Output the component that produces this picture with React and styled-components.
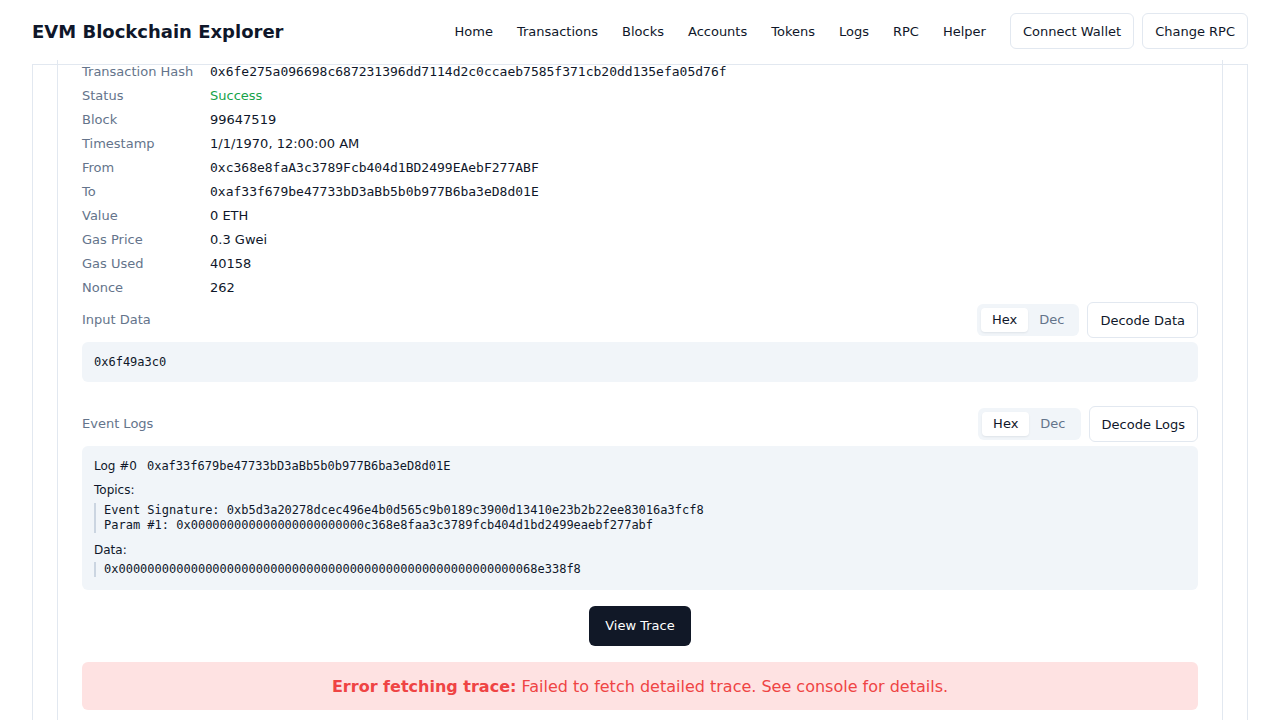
import React from "react";
import styled, { createGlobalStyle } from "styled-components";

const GlobalStyle = createGlobalStyle`
    html, body {
        margin: 0;
        padding: 0;
        background: #ffffff;
    }
    body {
        font-family: "DejaVu Sans", "Noto Sans", sans-serif;
        font-size: 13px;
        color: #0f172a;
        overflow: hidden;
    }
    * {
        box-sizing: border-box;
    }
`;

const mono = `"DejaVu Sans Mono", "Liberation Mono", monospace`;

const Header = styled.header`
    height: 64px;
    padding: 0 32px 2px;
    display: flex;
    align-items: center;
    justify-content: space-between;
    background: #ffffff;
`;

const Title = styled.h1`
    margin: 0;
    font-size: 18px;
    font-weight: 700;
    color: #0f172a;
`;

const NavArea = styled.div`
    display: flex;
    align-items: center;
    gap: 24px;
`;

const Nav = styled.nav`
    display: flex;
    align-items: center;
    gap: 24px;
`;

const NavLink = styled.a`
    font-size: 13px;
    color: #0f172a;
    text-decoration: none;
    cursor: pointer;
`;

const ButtonGroup = styled.div`
    display: flex;
    gap: 8px;
`;

const OutlineButton = styled.button`
    height: 36px;
    padding: 0 12px;
    font-family: inherit;
    font-size: 13px;
    color: #0f172a;
    background: #ffffff;
    border: 1px solid #e2e8f0;
    border-radius: 6px;
    cursor: pointer;
`;

const Outer = styled.main`
    margin: 0 32px;
    padding: 0 24px 24px;
    border: 1px solid #e2e8f0;
`;

const Inner = styled.section`
    padding: 0 24px 24px;
    border-left: 1px solid #e2e8f0;
    border-right: 1px solid #e2e8f0;
`;

const Details = styled.dl`
    margin: -5px 0 0;
    display: grid;
    grid-template-columns: 128px 1fr;
    grid-auto-rows: 24px;
    align-items: center;
`;

const Label = styled.dt`
    color: #64748b;
    line-height: 24px;
`;

const Value = styled.dd`
    margin: 0;
    line-height: 24px;
    color: ${({ $success }) => ($success ? "#16a34a" : "#0f172a")};
    font-family: ${({ $mono }) => ($mono ? mono : "inherit")};
`;

const Section = styled.div`
    margin-top: ${({ $gap }) => $gap}px;
`;

const SectionHead = styled.div`
    display: flex;
    align-items: center;
    justify-content: space-between;
    height: 36px;
    margin-bottom: 4px;
`;

const SectionLabel = styled.span`
    color: #64748b;
    padding-bottom: 1px;
`;

const Controls = styled.div`
    display: flex;
    align-items: center;
    gap: 8px;
`;

const Toggle = styled.div`
    display: flex;
    padding: 4px;
    background: #f1f5f9;
    border-radius: 6px;
`;

const ToggleOption = styled.button`
    height: 24px;
    padding: 0 11px 1px;
    font-family: inherit;
    font-size: 13px;
    border: none;
    border-radius: 4px;
    cursor: pointer;
    color: ${({ $active }) => ($active ? "#0f172a" : "#64748b")};
    background: ${({ $active }) => ($active ? "#ffffff" : "transparent")};
    box-shadow: ${({ $active }) => ($active ? "0 1px 2px rgba(15, 23, 42, 0.08)" : "none")};
`;

const DataBox = styled.div`
    padding: 12px;
    background: #f1f5f9;
    border-radius: 6px;
    font-family: ${mono};
    font-size: 12px;
    line-height: 16px;
    color: #0f172a;
`;

const LogBox = styled.div`
    padding: 12px 12px 13px;
    background: #f1f5f9;
    border-radius: 6px;
    font-size: 12px;
    line-height: 16px;
    color: #0f172a;
`;

const LogTitle = styled.div`
    display: flex;
    gap: 10px;
    margin-bottom: 8px;
`;

const Mono = styled.span`
    font-family: ${mono};
`;

const SubLabel = styled.div`
    margin-bottom: ${({ $space }) => $space}px;
`;

const Quote = styled.div`
    padding-left: 8px;
    border-left: 2px solid #cbd5e1;
    font-family: ${mono};
    line-height: 15px;
    margin-bottom: ${({ $last }) => ($last ? 0 : 9)}px;
`;

const Center = styled.div`
    display: flex;
    justify-content: center;
    margin: 16px 0;
`;

const DarkButton = styled.button`
    height: 40px;
    padding: 0 16px 1px;
    font-family: inherit;
    font-size: 13px;
    color: #ffffff;
    background: #111827;
    border: none;
    border-radius: 6px;
    cursor: pointer;
`;

const ErrorBox = styled.div`
    padding: 13px 12px 11px;
    background: #fee2e2;
    border-radius: 6px;
    text-align: center;
    font-size: 16px;
    line-height: 24px;
    color: #ef4444;

    strong {
        font-weight: 700;
    }
`;

const details = [
    { label: "Transaction Hash", value: "0x6fe275a096698c687231396dd7114d2c0ccaeb7585f371cb20dd135efa05d76f", mono: true },
    { label: "Status", value: "Success", success: true },
    { label: "Block", value: "99647519" },
    { label: "Timestamp", value: "1/1/1970, 12:00:00 AM" },
    { label: "From", value: "0xc368e8faA3c3789Fcb404d1BD2499EAebF277ABF", mono: true },
    { label: "To", value: "0xaf33f679be47733bD3aBb5b0b977B6ba3eD8d01E", mono: true },
    { label: "Value", value: "0 ETH" },
    { label: "Gas Price", value: "0.3 Gwei" },
    { label: "Gas Used", value: "40158" },
    { label: "Nonce", value: "262" },
];

const navItems = ["Home", "Transactions", "Blocks", "Accounts", "Tokens", "Logs", "RPC", "Helper"];

const FormatToggle = () => (
    <Toggle>
        <ToggleOption $active>Hex</ToggleOption>
        <ToggleOption>Dec</ToggleOption>
    </Toggle>
);

const App = () => (
    <>
        <GlobalStyle />
        <Header>
            <Title>EVM Blockchain Explorer</Title>
            <NavArea>
                <Nav>
                    {navItems.map((item) => (
                        <NavLink key={item}>{item}</NavLink>
                    ))}
                </Nav>
                <ButtonGroup>
                    <OutlineButton>Connect Wallet</OutlineButton>
                    <OutlineButton>Change RPC</OutlineButton>
                </ButtonGroup>
            </NavArea>
        </Header>
        <Outer>
            <Inner>
                <Details>
                    {details.map(({ label, value, mono: isMono, success }) => (
                        <React.Fragment key={label}>
                            <Label>{label}</Label>
                            <Value $mono={isMono} $success={success}>{value}</Value>
                        </React.Fragment>
                    ))}
                </Details>

                <Section $gap={2}>
                    <SectionHead>
                        <SectionLabel>Input Data</SectionLabel>
                        <Controls>
                            <FormatToggle />
                            <OutlineButton>Decode Data</OutlineButton>
                        </Controls>
                    </SectionHead>
                    <DataBox>0x6f49a3c0</DataBox>
                </Section>

                <Section $gap={24}>
                    <SectionHead>
                        <SectionLabel>Event Logs</SectionLabel>
                        <Controls>
                            <FormatToggle />
                            <OutlineButton>Decode Logs</OutlineButton>
                        </Controls>
                    </SectionHead>
                    <LogBox>
                        <LogTitle>
                            <span>Log #0</span>
                            <Mono>0xaf33f679be47733bD3aBb5b0b977B6ba3eD8d01E</Mono>
                        </LogTitle>
                        <SubLabel $space={5}>Topics:</SubLabel>
                        <Quote>
                            <div>Event Signature: 0xb5d3a20278dcec496e4b0d565c9b0189c3900d13410e23b2b22ee83016a3fcf8</div>
                            <div>Param #1: 0x000000000000000000000000c368e8faa3c3789fcb404d1bd2499eaebf277abf</div>
                        </Quote>
                        <SubLabel $space={4}>Data:</SubLabel>
                        <Quote $last>0x0000000000000000000000000000000000000000000000000000000068e338f8</Quote>
                    </LogBox>
                </Section>

                <Center>
                    <DarkButton>View Trace</DarkButton>
                </Center>

                <ErrorBox>
                    <strong>Error fetching trace:</strong> Failed to fetch detailed trace. See console for details.
                </ErrorBox>
            </Inner>
        </Outer>
    </>
);

export default App;
